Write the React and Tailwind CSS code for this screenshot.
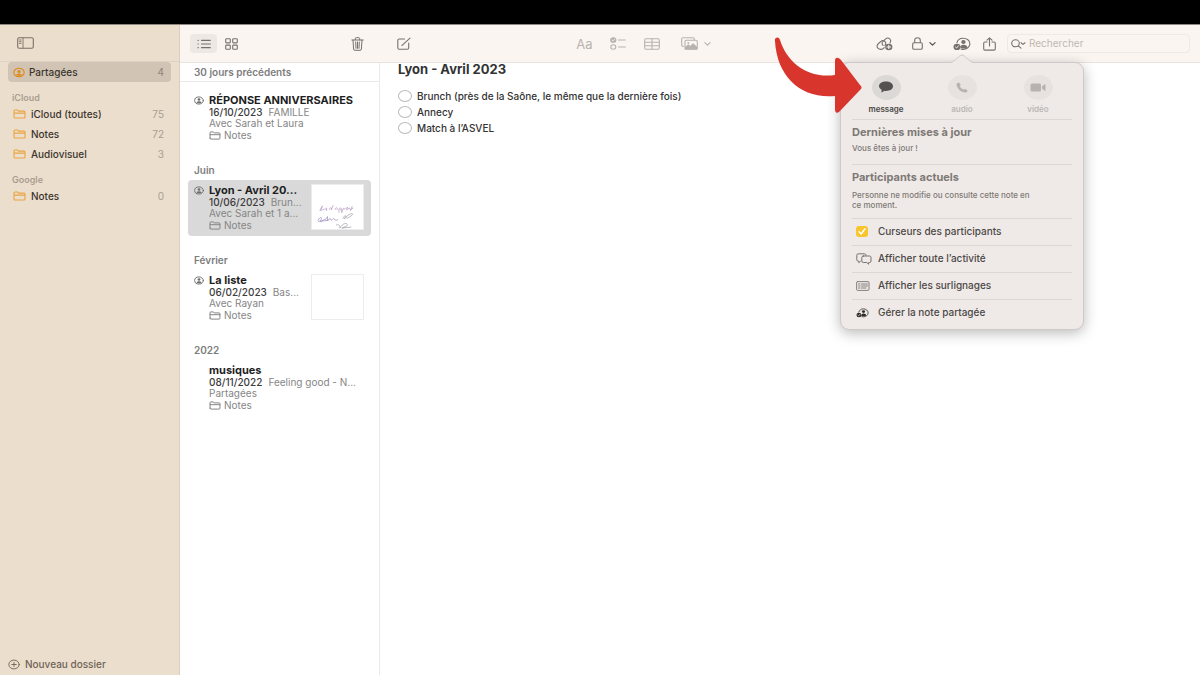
import { clsx } from 'clsx';

const Icon = ({ className, viewBox = '0 0 16 14', children }) => (
  <svg
    viewBox={viewBox}
    className={clsx('shrink-0', className)}
    fill="none"
    stroke="currentColor"
    strokeWidth="1.1"
    strokeLinecap="round"
    strokeLinejoin="round"
    aria-hidden="true"
  >
    {children}
  </svg>
);

const FolderIcon = ({ className }) => (
  <Icon viewBox="0 0 13 10" className={className}>
    <path d="M1 8V2Q1 1 2 1H4.4L5.6 2.1H11Q12 2.1 12 3.1V8Q12 9 11 9H2Q1 9 1 8ZM1 4.1H12" />
  </Icon>
);

const PersonIcon = ({ className }) => (
  <Icon viewBox="0 0 12 10" className={className}>
    <ellipse cx="6" cy="5" rx="5.2" ry="4.3" />
    <ellipse cx="6" cy="3.9" rx="1.6" ry="1.5" fill="currentColor" stroke="none" />
    <path d="M3 7.6Q3.4 5.9 6 5.9T9 7.6Q6 9.2 3 7.6Z" fill="currentColor" stroke="none" />
  </Icon>
);

const CollabIcon = ({ className }) => (
  <Icon viewBox="0 0 18 14" className={className}>
    <path d="M3.9 5.6C4.6 3 7 1.2 10 1.2C13.8 1.2 16.9 3.6 16.9 6.8S13.8 12.4 10 12.4L8.2 12.2" />
    <ellipse cx="10.4" cy="5" rx="2.2" ry="2" fill="currentColor" stroke="none" />
    <path d="M7.4 11.2Q7 8 10.4 7.8T14.4 10.6Q12 12 7.4 11.2Z" fill="currentColor" stroke="none" />
    <ellipse cx="4" cy="9.9" rx="3.5" ry="3.1" fill="currentColor" stroke="none" />
    <path d="M2.5 10L3.6 11L5.6 8.7" stroke="#f7f2ee" strokeWidth="0.9" />
  </Icon>
);

const ChevronIcon = ({ className }) => (
  <Icon viewBox="0 0 8 6" className={className}>
    <path d="M1 1.5L4 4.3L7 1.5" strokeWidth="1.3" />
  </Icon>
);

const ToolButton = ({ label, className, children }) => (
  <button type="button" aria-label={label} className={clsx('flex items-center justify-center', className)}>
    {children}
  </button>
);

const accounts = [
  {
    name: 'iCloud',
    folders: [
      { name: 'iCloud (toutes)', count: 75 },
      { name: 'Notes', count: 72 },
      { name: 'Audiovisuel', count: 3 },
    ],
  },
  { name: 'Google', folders: [{ name: 'Notes', count: 0 }] },
];

const sections = [
  {
    heading: '30 jours précédents',
    note: { title: 'RÉPONSE ANNIVERSAIRES', date: '16/10/2023', excerpt: 'FAMILLE', people: 'Avec Sarah et Laura', shared: true },
  },
  {
    heading: 'Juin',
    note: { title: 'Lyon - Avril 20...', date: '10/06/2023', excerpt: 'Brun...', people: 'Avec Sarah et 1 a...', shared: true, thumb: 'sketch', selected: true },
  },
  {
    heading: 'Février',
    note: { title: 'La liste', date: '06/02/2023', excerpt: 'Bas...', people: 'Avec Rayan', shared: true, thumb: 'blank' },
  },
  {
    heading: '2022',
    note: { title: 'musiques', date: '08/11/2022', excerpt: 'Feeling good - N...', people: 'Partagées' },
  },
];

const todos = ['Brunch (près de la Saône, le même que la dernière fois)', 'Annecy', 'Match à l’ASVEL'];

const Sidebar = () => (
  <aside className="flex w-[180px] shrink-0 flex-col border-r border-[#dccfc0] bg-[#ebdecd] text-[10px] font-medium text-[#3b352d]">
    <div className="flex h-[37px] items-center border-b border-[#dfd2c3] pl-[17px]">
      <ToolButton label="Afficher la barre latérale" className="text-[#7b7167]">
        <Icon viewBox="0 0 17 12" className="h-3 w-[17px]">
          <rect x="0.7" y="0.7" width="15.6" height="10.6" rx="1.5" />
          <path d="M6 1V11M2.5 3H4M2.5 4.7H4M2.5 6.4H4" strokeWidth="0.9" />
        </Icon>
      </ToolButton>
    </div>
    <nav className="pr-2 pl-2">
      <a href="#partagees" className="flex h-5 items-center rounded-[4px] bg-[#d1c4b4] pr-[7px] pl-[5px]">
        <PersonIcon className="h-[11px] w-3 text-[#e08a1c]" />
        <span className="ml-1 flex-1">Partagées</span>
        <span className="font-normal text-[#8d8377]">4</span>
      </a>
      {accounts.map((account) => (
        <section key={account.name} className="mt-[9px]">
          <h2 className="h-[13px] pl-1 text-[9px] leading-[13px] font-semibold text-[#a99e90]">{account.name}</h2>
          {account.folders.map((folder) => (
            <a key={folder.name} href="#dossier" className="flex h-5 items-center pr-[7px] pl-[5px]">
              <FolderIcon className="h-[10px] w-[13px] text-[#eba341]" />
              <span className="ml-[5px] flex-1">{folder.name}</span>
              <span className="font-normal text-[#a99e90]">{folder.count}</span>
            </a>
          ))}
        </section>
      ))}
    </nav>
    <button type="button" className="mt-auto flex h-[22px] items-center gap-[5px] pl-2 text-[#6e6355]">
      <Icon viewBox="0 0 12 10" className="h-[11px] w-3">
        <ellipse cx="6" cy="5" rx="5.2" ry="4.4" strokeWidth="0.9" />
        <path d="M6 3V7M3.7 5H8.3" strokeWidth="0.9" />
      </Icon>
      Nouveau dossier
    </button>
  </aside>
);

const Thumbnail = ({ kind }) => (
  <div className="mt-1 h-[46px] w-[53px] shrink-0 border border-[#ececec] bg-white">
    {kind === 'sketch' && (
      <svg viewBox="0 0 53 46" className="h-full w-full" fill="none" strokeWidth="0.7" aria-hidden="true">
        <path
          d="M8 27C10 22 12 20 10 24S8 27 13 25M13 26L15 24L15 27M18 26C18 23 21 23 20 26L22 21M24 26C24 23 27 23 26 26M28 25L28 29M28 25C31 22 31 27 29 26M31 25L31 29C32 23 35 23 33 26M35 25L37 23L36 26L39 24L40 26L43 24M42 22L40 27"
          stroke="#b394c0"
        />
        <path d="M6 37C8 33 11 33 9 37S13 35 14 36L16 33L16 37L19 35L20 37L22 35L25 37L27 36M6 38L17 37" stroke="#9a86b8" />
        <path d="M32 35C34 30 38 33 34 35S40 29 42 30S38 34 36 35M25 42C29 40 30 45 28 45M29 45C33 38 39 40 36 43L31 45L41 44" stroke="#9b97a1" />
      </svg>
    )}
  </div>
);

const NoteCard = ({ note }) => (
  <a
    href="#note"
    className={clsx('mx-2 flex h-14 rounded-[4px] pr-[7px] pl-[6px] text-[10px]', note.selected && 'bg-[#d9d9d9]')}
  >
    <span className="w-[15px] shrink-0 pt-[6px]">
      {note.shared && <PersonIcon className="h-[9px] w-[10px] text-[#6c6c6c]" />}
    </span>
    <div className="min-w-0 flex-1 whitespace-nowrap text-[#858585]">
      <h3 className="pt-1 text-[11px] leading-[13px] font-bold text-[#1f1f1f]">{note.title}</h3>
      <p className="flex gap-[6px] leading-[11px]">
        <span className="font-medium text-[#3c3c3c]">{note.date}</span>
        <span>{note.excerpt}</span>
      </p>
      <p className="leading-[11px]">{note.people}</p>
      <p className="flex items-center gap-[3px] leading-3">
        <FolderIcon className="h-[9px] w-3" />
        Notes
      </p>
    </div>
    {note.thumb && <Thumbnail kind={note.thumb} />}
  </a>
);

const NoteList = () => (
  <div className="w-[200px] shrink-0 border-r border-[#e9e9e9] bg-white">
    {sections.map(({ heading, note }, index) => (
      <section key={heading} className={clsx(index > 0 && 'mt-[15px]')}>
        <h2
          className={clsx(
            'pl-[14px] text-[10px] font-semibold text-[#7d7d7d]',
            index === 0 ? 'mb-2 border-b border-[#e9e9e9] leading-[18px]' : 'leading-[19px]',
          )}
        >
          {heading}
        </h2>
        <NoteCard note={note} />
      </section>
    ))}
  </div>
);

const Editor = () => (
  <main className="min-w-0 flex-1 bg-white pl-[18px] text-[#333]">
    <h1 className="text-[13px] leading-3 font-bold">Lyon - Avril 2023</h1>
    <ul className="mt-[13px] text-[10px] font-medium">
      {todos.map((todo) => (
        <li key={todo}>
          <label className="flex h-4 items-center gap-[5px]">
            <input type="checkbox" className="h-3 w-[14px] appearance-none rounded-[50%] border border-[#b9b9b9]" />
            {todo}
          </label>
        </li>
      ))}
    </ul>
  </main>
);

const ContactButton = ({ label, active, children }) => (
  <button type="button" className="flex flex-col items-center gap-px">
    <span
      className={clsx(
        'flex h-[25px] w-[29px] items-center justify-center rounded-[50%]',
        active ? 'bg-[#dcd8d5] text-[#545250]' : 'bg-[#e7e2df] text-[#b7b2af]',
      )}
    >
      {children}
    </span>
    <span className={clsx('text-[8px] leading-4 font-semibold', active ? 'text-[#4a4846]' : 'text-[#bcb6b3]')}>{label}</span>
  </button>
);

const MenuRow = ({ label, children }) => (
  <button type="button" className="flex h-[27px] w-full items-center border-t border-[#dcd7d4] pl-1 text-left">
    <span className="flex w-[22px] items-center">{children}</span>
    {label}
  </button>
);

const SharePopover = () => (
  <div className="absolute top-full left-1/2 z-10 mt-[11px] w-[244px] -translate-x-1/2 rounded-[9px] border border-[#cfcac7] bg-[#efeae7] pb-[3px] text-[10px] text-[#4b4846] shadow-[0_3px_14px_rgba(0,0,0,0.28)]">
    <svg viewBox="0 0 24 9" className="absolute -top-[9px] left-1/2 h-[9px] w-6 -translate-x-1/2" aria-hidden="true">
      <path d="M0 9C5 8.5 9 1 12 1S19 8.5 24 9Z" fill="#efeae7" />
      <path d="M0 8.5C5 8 9 1 12 1S19 8 24 8.5" fill="none" stroke="#cfcac7" />
    </svg>
    <svg viewBox="0 0 88 76" className="absolute -top-[26px] -left-[67px] h-[76px] w-[88px]" aria-hidden="true">
      <path
        d="M1 4C0 0 5 -1 6 3C13 25 33 42 61 38V24C61 20 64 20 67 23L86 48C88 50 88 51 86 53L66 74C63 77 61 76 61 72V59C27 62 3 40 1 4Z"
        fill="#d8352d"
      />
    </svg>
    <div className="grid grid-cols-3 px-[7px] pt-3 pb-[2px]">
      <ContactButton label="message" active>
        <svg viewBox="0 0 14 12" className="h-3 w-[14px]" fill="currentColor" aria-hidden="true">
          <path d="M7 0.5C11 0.5 14 2.5 14 5.3S11 10 7 10Q6 10 5 9.8Q4 11.5 2 11.3Q3 10.4 2.7 9.1Q0 7.7 0 5.3C0 2.5 3 0.5 7 0.5Z" />
        </svg>
      </ContactButton>
      <ContactButton label="audio">
        <svg viewBox="0 0 12 11" className="h-[11px] w-3" fill="currentColor" aria-hidden="true">
          <path d="M2 0.7Q0.3 1.2 0.6 3C1 6.5 5 10.2 9 10.6Q11 10.6 11.5 9Q11.7 8.3 11 7.9L9.3 7Q8.6 6.7 8 7.3L7.5 7.8Q5 6.8 3.7 4.3L4.3 3.8Q4.9 3.3 4.5 2.6L3.4 1Q2.9 0.4 2 0.7Z" />
        </svg>
      </ContactButton>
      <ContactButton label="vidéo">
        <svg viewBox="0 0 16 9" className="h-[9px] w-4" fill="currentColor" aria-hidden="true">
          <rect x="0.5" y="0.5" width="10.5" height="8" rx="1.5" />
          <path d="M12 3.5L14.7 1.3Q15.5 1 15.5 1.8V7.2Q15.5 8 14.7 7.7L12 5.5Z" />
        </svg>
      </ContactButton>
    </div>
    <div className="px-[11px]">
      <section className="h-[45px] border-t border-[#dcd7d4] pt-1 text-[#7e7976]">
        <h2 className="text-[11px] leading-4 font-bold">Dernières mises à jour</h2>
        <p className="text-[8px] leading-4 font-medium">Vous êtes à jour !</p>
      </section>
      <section className="h-[54px] border-t border-[#dcd7d4] pt-1 text-[#7e7976]">
        <h2 className="text-[11px] leading-4 font-bold">Participants actuels</h2>
        <p className="mt-[5px] pr-9 text-[8px] leading-[10px] font-medium">
          Personne ne modifie ou consulte cette note en ce moment.
        </p>
      </section>
      <label className="flex h-[27px] items-center border-t border-[#dcd7d4] pl-1 font-medium">
        <span className="relative flex w-[22px] items-center">
          <input type="checkbox" defaultChecked className="h-[11px] w-3 appearance-none rounded-[3px] bg-[#f9c52d]" />
          <Icon viewBox="0 0 12 11" className="pointer-events-none absolute left-0 h-[11px] w-3 text-white">
            <path d="M3 5.7L5.2 8L9 2.8" strokeWidth="1.5" />
          </Icon>
        </span>
        Curseurs des participants
      </label>
      <div className="font-medium">
        <MenuRow label="Afficher toute l’activité">
          <Icon viewBox="0 0 16 12" className="h-3 w-4 text-[#696562]">
            <path d="M4.5 8.2L2.8 9.7V8.2H2.3Q0.8 8.2 0.8 6.7V2.3Q0.8 0.8 2.3 0.8H8.5Q10 0.8 10 2.3" strokeWidth="0.9" />
            <path d="M7.3 3H13.5Q15 3 15 4.5V8Q15 9.5 13.5 9.5H12.7V11.2L10.7 9.5H7.3Q5.8 9.5 5.8 8V4.5Q5.8 3 7.3 3Z" strokeWidth="0.9" />
          </Icon>
        </MenuRow>
        <MenuRow label="Afficher les surlignages">
          <Icon viewBox="0 0 14 10" className="h-[10px] w-[14px] text-[#797572]">
            <rect x="0.6" y="0.6" width="12.4" height="8.8" rx="1" strokeWidth="0.9" />
            <path d="M2.5 3H4M2.5 5H4M2.5 7H4M5.5 3H11.5M5.5 5H11.5M5.5 7H10" strokeWidth="0.9" />
          </Icon>
        </MenuRow>
        <MenuRow label="Gérer la note partagée">
          <CollabIcon className="h-[10px] w-[13px] text-[#2f2d2b]" />
        </MenuRow>
      </div>
    </div>
  </div>
);

const Toolbar = () => (
  <header className="flex h-[38px] items-center border-b border-[#eae4df] bg-[#faf5f1] text-[#77716c]">
    <div className="flex w-[200px] shrink-0 items-center pr-4 pl-[10px]">
      <ToolButton label="Liste" className="h-[19px] w-[27px] rounded-[4px] bg-[#eee8e4]">
        <Icon viewBox="0 0 14 10" className="h-[10px] w-[14px]">
          <path d="M4.5 1.3H13.3M4.5 5H13.3M4.5 8.7H13.3M1 1.3H1.3M1 5H1.3M1 8.7H1.3" strokeWidth="1.2" />
        </Icon>
      </ToolButton>
      <ToolButton label="Galerie" className="ml-2">
        <Icon viewBox="0 0 13 12" className="h-3 w-[13px]">
          <rect x="0.7" y="0.7" width="4.6" height="4.2" rx="0.8" />
          <rect x="7.7" y="0.7" width="4.6" height="4.2" rx="0.8" />
          <rect x="0.7" y="7.1" width="4.6" height="4.2" rx="0.8" />
          <rect x="7.7" y="7.1" width="4.6" height="4.2" rx="0.8" />
        </Icon>
      </ToolButton>
      <ToolButton label="Supprimer" className="ml-auto">
        <Icon viewBox="0 0 13 14" className="h-[14px] w-[13px]">
          <path d="M0.8 3H12.2M4.3 2.8V1.6Q4.3 0.7 5.2 0.7H7.8Q8.7 0.7 8.7 1.6V2.8M2 3.2L2.6 12Q2.7 13.3 4 13.3H9Q10.3 13.3 10.4 12L11 3.2M4.7 5L5 11.3M6.5 5V11.3M8.3 5L8 11.3" strokeWidth="1" />
        </Icon>
      </ToolButton>
    </div>
    <div className="flex flex-1 items-center justify-between pr-[10px] pl-[17px]">
      <ToolButton label="Nouvelle note">
        <Icon viewBox="0 0 14 13" className="h-[13px] w-[14px]">
          <path d="M7.5 2H2.2Q0.8 2 0.8 3.4V10.8Q0.8 12.2 2.2 12.2H10.3Q11.7 12.2 11.7 10.8V6M5.3 8.2L13 1.2M5.3 8.2L4.9 8.5" />
        </Icon>
      </ToolButton>
      <div className="flex items-center text-[#b9b3ae]">
        <ToolButton label="Format" className="text-[13px] leading-4">
          Aa
        </ToolButton>
        <ToolButton label="Liste de pointage" className="ml-[17px]">
          <Icon viewBox="0 0 16 13" className="h-[13px] w-4">
            <ellipse cx="3.3" cy="3" rx="2.6" ry="2.3" fill="currentColor" />
            <path d="M2.1 3L3 3.9L4.6 2.2" stroke="#faf5f1" strokeWidth="0.8" />
            <ellipse cx="3.3" cy="10" rx="2.5" ry="2.2" />
            <path d="M8.5 3H15.3M8.5 10H15.3" />
          </Icon>
        </ToolButton>
        <ToolButton label="Tableau" className="ml-[18px]">
          <Icon viewBox="0 0 16 12" className="h-3 w-4">
            <rect x="0.7" y="0.7" width="14.6" height="10.6" rx="1.5" />
            <path d="M8 0.7V11.3M0.7 4.2H15.3M0.7 7.8H15.3" />
          </Icon>
        </ToolButton>
        <ToolButton label="Médias" className="ml-[21px] gap-[6px]">
          <Icon viewBox="0 0 17 13" className="h-[13px] w-[17px]">
            <path d="M2.7 9.2H2Q0.7 9.2 0.7 7.9V2Q0.7 0.7 2 0.7H12Q13.3 0.7 13.3 2V2.7" />
            <rect x="4" y="3.3" width="12.3" height="9" rx="1.3" />
            <path d="M4.3 10.7L7.3 8L9.3 9.7L12 7L16 10.5V12H4.3Z" fill="currentColor" />
            <circle cx="7.3" cy="6" r="0.9" fill="currentColor" stroke="none" />
          </Icon>
          <ChevronIcon className="h-[6px] w-[7px]" />
        </ToolButton>
      </div>
      <div className="flex items-center">
        <ToolButton label="Ajouter un lien">
          <Icon viewBox="0 0 17 14" className="h-[14px] w-[17px]">
            <path d="M8.3 10.6Q6.4 13 3.7 12.2C1 11.4 0.2 8.8 2 7L5.2 4.2C7.2 2.7 10 4.2 9.8 6.6Q9.7 7.6 8.9 8.3" />
            <path d="M7.1 8.4C5.7 7.3 5.8 5.5 7 4.4L9.7 1.8C11.6 0.2 14.5 1.3 14.7 3.8Q14.7 5 14 6" />
            <ellipse cx="12.8" cy="10" rx="3.6" ry="3.3" fill="currentColor" stroke="none" />
            <path d="M11 10H14.6M12.8 8.4V11.6" stroke="#faf5f1" />
          </Icon>
        </ToolButton>
        <ToolButton label="Verrouiller" className="ml-[19px] gap-[6px]">
          <Icon viewBox="0 0 11 13" className="h-[13px] w-[11px]">
            <rect x="0.7" y="5.7" width="9.6" height="6.6" rx="1.3" />
            <path d="M2.7 5.5V3.4Q2.7 0.7 5.5 0.7T8.3 3.4V5.5" />
          </Icon>
          <ChevronIcon className="h-[6px] w-[7px] text-[#4d4946]" />
        </ToolButton>
        <div className="relative ml-[17px]">
          <ToolButton label="Collaborer" className="h-[14px]">
            <CollabIcon className="h-[14px] w-[18px]" />
          </ToolButton>
          <SharePopover />
        </div>
        <ToolButton label="Partager" className="ml-3">
          <Icon viewBox="0 0 13 14" className="h-[14px] w-[13px]">
            <path d="M4 5H2Q0.7 5 0.7 6.3V11.8Q0.7 13.1 2 13.1H11Q12.3 13.1 12.3 11.8V6.3Q12.3 5 11 5H9M6.5 9V1M4 3.2L6.5 0.9L9 3.2" />
          </Icon>
        </ToolButton>
        <label className="ml-[11px] flex h-[19px] w-[183px] items-center rounded-[4px] border border-[#efe8e3] pl-[3px]">
          <Icon viewBox="0 0 15 10" className="h-[10px] w-[15px]">
            <ellipse cx="4.5" cy="4.3" rx="3.8" ry="3.5" />
            <path d="M7.3 6.8L10 9.2M10 3.8L12 5.4L14 3.8" />
          </Icon>
          <input
            type="search"
            aria-label="Rechercher"
            placeholder="Rechercher"
            className="ml-[3px] min-w-0 flex-1 bg-transparent text-[10px] outline-none placeholder:text-[#bfb8b3]"
          />
        </label>
      </div>
    </div>
  </header>
);

const App = () => (
  <div className="flex min-h-screen flex-col bg-white font-['Inter','Liberation_Sans',sans-serif]">
    <div className="h-[25px] shrink-0 border-b border-[#8f8882] bg-black" />
    <div className="flex flex-1">
      <Sidebar />
      <div className="flex min-w-0 flex-1 flex-col">
        <Toolbar />
        <div className="flex flex-1">
          <NoteList />
          <Editor />
        </div>
      </div>
    </div>
  </div>
);

export default App;
